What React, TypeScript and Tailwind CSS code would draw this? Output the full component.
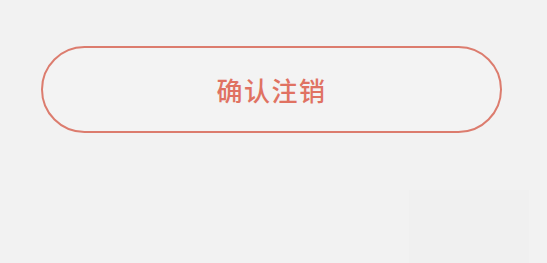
export default function App() {
  return (
    <div
      className="w-[547px] h-[263px] bg-[#f2f2f2] flex flex-col overflow-hidden"
      style={{ fontFamily: '"Noto Sans CJK SC", "Noto Sans", sans-serif' }}
    >
      {/* 确认注销按钮 */}
      <div className="pt-[46px] pl-[41px]">
        <button className="w-[461px] h-[87px] rounded-full border-2 border-[#dc7c6e] bg-[#f3f3f3] text-[#e07262] text-[26px] font-medium tracking-[1.5px] flex items-center justify-center">
          确认注销
        </button>
      </div>

      {/* 右下角淡色区块 */}
      <div className="flex justify-end pr-[18px] mt-[57px] flex-1">
        <div className="w-[120px] h-full bg-[#f0f0f0]" />
      </div>
    </div>
  );
}
